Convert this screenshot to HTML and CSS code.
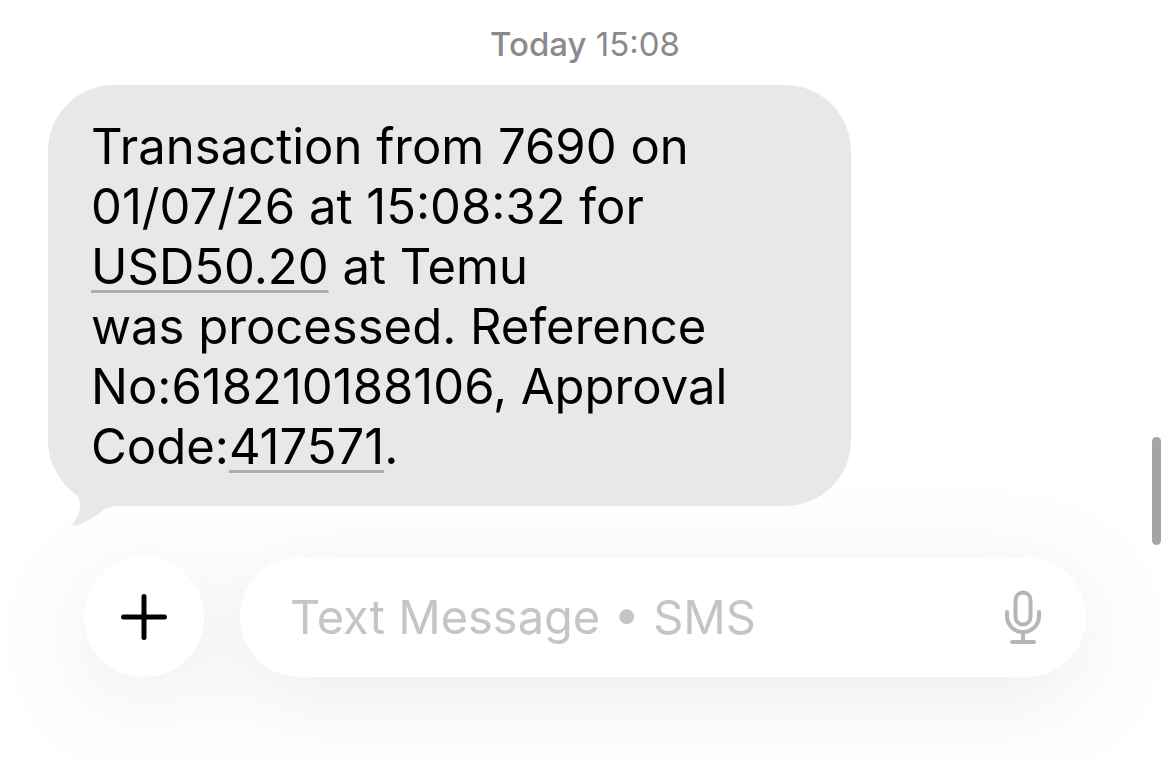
FILE: index.html
```
<!DOCTYPE html>
<html lang="en">
<head>
<meta charset="utf-8">
<meta name="viewport" content="width=device-width, initial-scale=1">
<title>Messages</title>
<link rel="stylesheet" href="styles.css">
</head>
<body>
<main class="chat">
  <div class="time"><b>Today</b> 15:08</div>
  <div class="bubble">
    <p>Transaction from 7690 on<br>
    01/07/26 at 15:08:32 for<br>
    <a href="#">USD50.20</a> at Temu<br>
    was processed. Reference<br>
    No:618210188106, Approval<br>
    Code:<a href="#">417571</a>.</p>
    <!-- tail -->
    <svg class="tail" width="70" height="50" viewBox="0 0 70 50" aria-hidden="true">
      <path d="M14 4 C18 10 22 14 28 18.500 C31 21 32 25 32 29 C32 36 30 41 26 46 C23 49 25 50.500 29 49.500 C38 46 44 42 52 36.500 C57 33 60 30 69 30 L69 4Z"/>
    </svg>
  </div>
  <form class="composer" onsubmit="return false">
    <button type="button" class="plus" aria-label="Add">
      <svg width="48" height="48" viewBox="0 0 48 48"><path d="M24 3.500V44.500M3.500 24H44.500"/></svg>
    </button>
    <div class="field">
      <input type="text" aria-label="Text Message" placeholder="Text Message • SMS">
      <button type="button" class="mic" aria-label="Dictate">
        <svg width="36" height="54" viewBox="0 0 36 54">
          <rect x="10.500" y="2.500" width="15" height="32" rx="7.500"/>
          <path d="M2 22V26C2 35 9 42 18 42S34 35 34 26V22M18 42V51M7 52H29"/>
        </svg>
      </button>
    </div>
  </form>
</main>
<div class="scroll"></div>
</body>
</html>
```

FILE: styles.css
```
* {
	box-sizing:border-box;
}
body {
	margin:0;
	min-height:100vh;
	background:#fff;
	color:#000;
	font-family:Inter, "Liberation Sans", sans-serif;
	position:relative;
	overflow:hidden;
}
.chat {
	display:flex;
	flex-direction:column;
	padding-top:24px;
}
.time {
	text-align:center;
	font-size:33px;
	line-height:40px;
	color:#8a8a8d;
	margin-bottom:21px;
}
.time b {
	font-weight:500;
}
.bubble {
	position:relative;
	z-index:1;
	max-width:803px;
	margin:0 48px 51px;
	padding:32px 43px 29px;
	background:#e8e8ea;
	border-radius:66px;
}
.bubble p {
	margin:0;
	font-size:49px;
	line-height:60px;
	white-space:nowrap;
}
.bubble a {
	color:inherit;
	text-decoration:underline;
	text-decoration-color:#adadb0;
	text-decoration-thickness:3px;
	text-underline-offset:6px;
	text-decoration-skip-ink:none;
}
.tail {
	position:absolute;
	left:0;
	bottom:-20px;
	fill:#e8e8ea;
}
/* one shadow for the button and the field together */
.composer {
	display:flex;
	gap:36px;
	padding:0 84px;
	filter:drop-shadow(0 20px 50px rgba(0,0,0,.08));
}
.composer button {
	border:0;
	background:none;
	padding:0;
	cursor:pointer;
}
.composer svg {
	display:block;
	fill:none;
	stroke-linecap:round;
	stroke-linejoin:round;
}
.composer .plus {
	width:120px;
	height:120px;
	flex:none;
	display:grid;
	place-items:center;
	background:#fff;
	border-radius:50%;
}
.plus svg {
	stroke:#000;
	stroke-width:5;
}
.field {
	flex:1;
	min-width:0;
	height:120px;
	display:flex;
	align-items:center;
	padding:0 45px 0 50px;
	background:#fff;
	border-radius:60px;
}
.field input {
	flex:1;
	min-width:0;
	border:0;
	outline:0;
	padding:0;
	background:none;
	font-family:inherit;
	font-size:47px;
	line-height:60px;
}
.field input::placeholder {
	color:#c5c5c7;
	opacity:1;
}
.mic svg {
	stroke:#b5b5bc;
	stroke-width:4;
}
.scroll {
	position:absolute;
	right:9px;
	top:437px;
	width:9px;
	height:108px;
	border-radius:5px;
	background:#a4a4a4;
}
```
